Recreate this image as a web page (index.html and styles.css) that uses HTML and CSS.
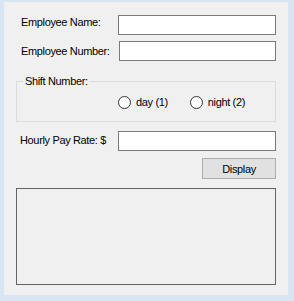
FILE: index.html
```html
<!DOCTYPE html>
<html>

<head>
    <meta charset="utf-8">
    <title>Pay Calculator</title>
    <link rel="stylesheet" href="styles.css">
</head>

<body>

<div class="form">
    <div class="row">
        <label class="lbl lbl-name" for="txtName">Employee Name:</label>
        <input type="text" id="txtName" class="txt">
    </div>
    <div class="row row-num">
        <label class="lbl lbl-num" for="txtNumber">Employee Number:</label>
        <input type="text" id="txtNumber" class="txt txt-num">
    </div>

    <fieldset class="group">
        <legend>Shift Number:</legend>
        <div class="shifts">
            <label class="opt"><span class="dot"></span>day (1)</label>
            <label class="opt opt-night"><span class="dot"></span>night (2)</label>
        </div>
    </fieldset>

    <div class="row row-pay">
        <label class="lbl lbl-pay" for="txtRate">Hourly Pay Rate: $</label>
        <input type="text" id="txtRate" class="txt">
    </div>

    <div class="actions">
        <button type="button" class="btn">Display</button>
    </div>

    <div class="output"></div>
</div>

</body>

</html>
```

FILE: styles.css
```css
html,
body {
    margin: 0;
    padding: 0;
}

body {
    background: #dae5f3;
    font-family: "Liberation Sans", Arial, sans-serif;
    font-size: 11px;
    color: #000;
}

.form {
    margin: 2px 0 0 4px;
    width: 284px;
    height: 293px;
    box-sizing: border-box;
    padding: 13px 12px 0 12px;
    background: #f0f0f0;
}

.row {
    display: flex;
    align-items: flex-start;
    height: 20px;
}

.row-num {
    margin-top: 6px;
}

.row-pay {
    margin-top: 9px;
}

.lbl {
    margin-left: 5px;
    line-height: 13px;
    letter-spacing: -0.35px;
}

.lbl-name {
    padding-top: 1px;
}

.lbl-num {
    padding-top: 4px;
}

.lbl-pay {
    margin-left: 4px;
    padding-top: 3px;
}

.txt {
    margin: 0 0 0 auto;
    width: 158px;
    height: 20px;
    box-sizing: border-box;
    padding: 0 2px;
    border: 1px solid #7a7a7a;
    background: #fff;
    font: inherit;
    outline: none;
}

.txt-num {
    width: 157px;
}

.group {
    margin: 14px 0 0 0;
    padding: 0;
    min-width: 0;
    border: 1px solid #dcdcdc;
}

.group legend {
    margin-left: 6px;
    padding: 0 2px;
    line-height: 13px;
    letter-spacing: -0.35px;
}

.shifts {
    display: flex;
    align-items: center;
    height: 13px;
    margin: 8px 0 12px 0;
    padding-left: 101px;
}

.opt {
    display: flex;
    align-items: center;
    letter-spacing: -0.35px;
    line-height: 13px;
}

.opt-night {
    margin-left: 22px;
}

.dot {
    width: 13px;
    height: 13px;
    box-sizing: border-box;
    margin-right: 5px;
    border: 1px solid #333;
    border-radius: 50%;
    background: #fff;
}

.actions {
    display: flex;
    justify-content: flex-end;
    margin-top: 7px;
}

.btn {
    width: 74px;
    height: 21px;
    padding: 0;
    border: 1px solid #adadad;
    background: #e1e1e1;
    font: inherit;
    letter-spacing: -0.35px;
    color: #000;
}

.output {
    margin-top: 9px;
    height: 97px;
    border: 1px solid #646464;
    box-sizing: border-box;
    background: #f0f0f0;
}
```
